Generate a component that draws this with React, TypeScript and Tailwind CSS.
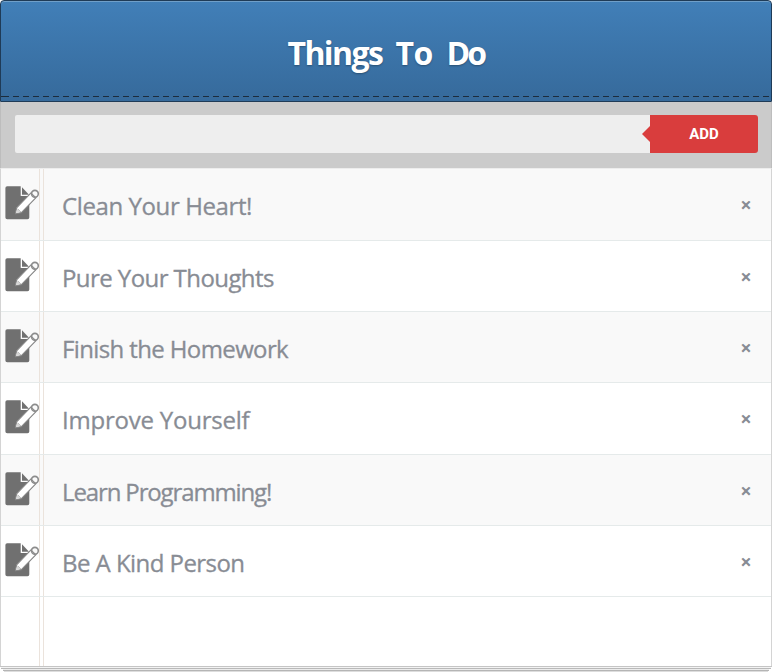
import React from "react";

const items = [
  { text: "Clean Your Heart!", height: "h-[72px]", tracking: "tracking-[-0.4px]" },
  { text: "Pure Your Thoughts", height: "h-[71px]", tracking: "tracking-[-0.57px]" },
  { text: "Finish the Homework", height: "h-[71px]", tracking: "tracking-[-0.62px]" },
  { text: "Improve Yourself", height: "h-[72px]", tracking: "tracking-[-0.22px]" },
  { text: "Learn Programming!", height: "h-[71px]", tracking: "tracking-[-1.13px]" },
  { text: "Be A Kind Person", height: "h-[71px]", tracking: "tracking-[-0.55px]" },
];

function NoteIcon() {
  return (
    <svg width="38" height="36" viewBox="4 5 38 36" className="shrink-0" fill="none">
      <path d="M7.2 6.3H20.7V16H29.3V37.5Q29.3 39.3 27.5 39.3H7.2Q5.4 39.3 5.4 37.5V8.1Q5.4 6.3 7.2 6.3Z" fill="#707070" />
      <path d="M22 7.2L29 14.7H22Z" fill="#707070" />
      <path d="M15.4 33.8L16.6 27.8L31 12.8L36 17.6L21.4 32.6Z" fill="#fff" stroke="#858585" strokeWidth="1.1" strokeLinejoin="round" />
      <path d="M15.9 33.2L17.4 29L20.2 31.9Z" fill="#d6d6d6" />
      <path d="M17.4 28.6L20.8 32" stroke="#a0a0a0" strokeWidth="0.8" />
      <circle cx="34.9" cy="13.8" r="3.4" fill="#fafafa" stroke="#8c8c8c" strokeWidth="1.6" />
      <path d="M31.3 13.3L35.4 17.4" stroke="#8c8c8c" strokeWidth="1.2" />
    </svg>
  );
}

export default function App() {
  return (
    <div className="flex h-[672px] w-[772px] flex-col bg-white font-['Comic_Sans_MS','Open_Sans',sans-serif]">
      <header className="flex h-[102px] shrink-0 flex-col rounded-t-[4px] border border-[#1f3b57] bg-linear-to-b from-[#417fb8] to-[#366a9b] shadow-[inset_0_1px_0_#6f9fc9]">
        <h1 className="flex h-[95px] items-center justify-center gap-[13px] pt-[9px] text-[32px] leading-none font-bold whitespace-nowrap text-white [text-shadow:0_1px_2px_rgba(0,0,0,0.3)]">
          <span className="w-[95px] tracking-[-1.6px]">Things</span>{" "}
          <span className="w-[38px] tracking-[-0.5px]">To</span>{" "}
          <span className="w-[38px] tracking-[-3px]">Do</span>
        </h1>
        <div className="flex h-px">
          <div className="w-2 bg-[#1c2c3c]" />
          <div className="grow bg-[repeating-linear-gradient(90deg,transparent_0px,transparent_4px,#1c2c3c_4px,#1c2c3c_10px)]" />
        </div>
      </header>
      <form className="flex h-[66px] shrink-0 border-x border-[#bdbdbd] bg-[#cbcbcb] pt-[13px] pr-[13px] pl-[14px]" onSubmit={(e) => e.preventDefault()}>
        <input aria-label="New item" className="h-[38px] w-[627px] shrink-0 rounded-l-[2px] bg-[#eeeeee] px-3 outline-none" />
        <div className="flex h-[38px] w-2 shrink-0 items-center bg-[#eeeeee]">
          <svg width="8" height="16" viewBox="0 0 8 16"><path d="M8 0L0 8L8 16Z" fill="#d93d3d" /></svg>
        </div>
        <button className="h-[38px] w-[108px] shrink-0 rounded-r-[3px] bg-[#d93d3d] font-[Roboto,sans-serif] text-[15px] leading-[38px] font-bold text-white">ADD</button>
      </form>
      <main className="flex h-[498px] flex-col border-x border-t border-x-[#d4d4d4] border-t-[#ededed]">
        <ul>
          {items.map((item, i) => (
            <li key={item.text} className={`flex border-b border-[#e5eaea] ${item.height} ${i % 2 === 0 ? "bg-[#f9f9f9]" : "bg-white"}`}>
              <div className="flex w-[43px] shrink-0 border-r border-[#ebe3dc]">
                <div className="w-[39px] shrink-0 border-r border-[#ebe3dc] pt-[16px] pl-[3px]"><NoteIcon /></div>
              </div>
              <span className={`grow pl-[18px] text-[24px] leading-[74px] whitespace-nowrap text-[#888c94] [-webkit-text-stroke:0.3px_#888c94] ${item.tracking}`}>{item.text}</span>
              <button aria-label="Remove" className="mr-[17px] w-4 text-center font-['Open_Sans',sans-serif] text-[20px] leading-[72px] font-bold text-[#888c94]">×</button>
            </li>
          ))}
        </ul>
        <div className="flex grow">
          <div className="w-[39px] border-r border-[#ebe3dc]" />
          <div className="w-1 border-r border-[#ebe3dc]" />
        </div>
      </main>
      <footer className="flex h-[6px] shrink-0 flex-col items-center bg-white">
        <div className="h-px w-full bg-[#c5c5c5]" />
        <div className="h-[2px] w-[770px] border-b border-[#b9b9b9] bg-[#f3f3f3]" />
        <div className="h-[2px] w-[766px] border-b border-[#b5b5b5] bg-[#ececec]" />
        <div className="h-px w-[764px] bg-[#dddddd]" />
      </footer>
    </div>
  );
}
